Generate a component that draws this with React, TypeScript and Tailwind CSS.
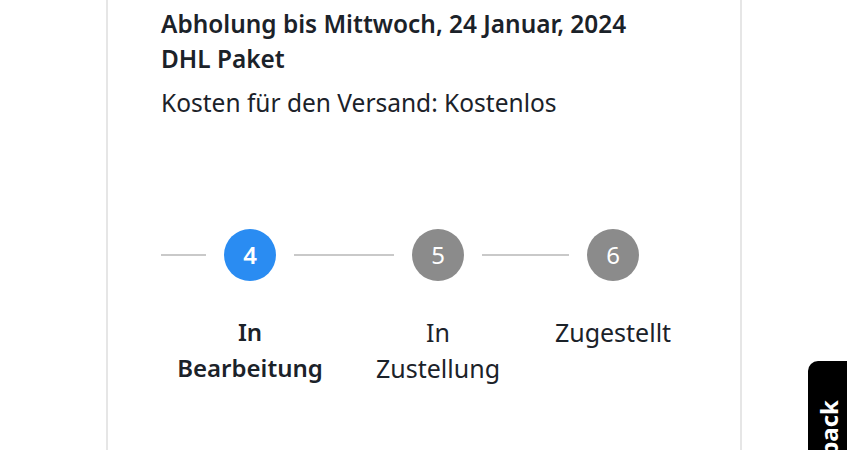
const STEPS = [
  { n: 4, label: ["In", "Bearbeitung"], active: true },
  { n: 5, label: ["In", "Zustellung"], active: false },
  { n: 6, label: ["Zugestellt"], active: false },
];

// line widths before each step circle
const LINES = [45, 100, 87];

export default function App() {
  return (
    <div className="relative h-[450px] w-[847px] overflow-hidden bg-white font-['Noto_Sans','Liberation_Sans',sans-serif] text-[#1b2229]">
      <div className="ml-[106px] h-full w-[636px] border-x-2 border-[#e6e6e6] pl-[53px] pt-[6px]">
        <p className="text-[24.4px] font-semibold leading-[35px]">Abholung bis Mittwoch, 24 Januar, 2024</p>
        <p className="text-[24.4px] font-semibold leading-[35px]">DHL Paket</p>
        <p className="mt-[9px] text-[24.5px] leading-[35px]">Kosten für den Versand: Kostenlos</p>

        {/* Stepper */}
        <div className="mt-[109px] flex items-start gap-[18px]">
          {STEPS.map((step, i) => (
            <div key={step.n} className="flex items-start gap-[18px]">
              <div className="mt-[25px] h-[2px] bg-[#c9c9c9]" style={{ width: LINES[i] }} />
              <div className="flex w-[52px] flex-col items-center">
                <div
                  className={
                    step.active
                      ? "flex h-[52px] w-[52px] items-center justify-center rounded-full bg-[#2a8cf2] text-[24px] font-semibold text-white"
                      : "flex h-[52px] w-[52px] items-center justify-center rounded-full bg-[#8b8b8b] text-[24px] text-white"
                  }
                >
                  {step.n}
                </div>
                <div
                  className={
                    step.active
                      ? "mt-[33px] whitespace-nowrap text-center text-[24px] font-semibold leading-[36px]"
                      : "mt-[33px] whitespace-nowrap text-center text-[25px] leading-[36px]"
                  }
                >
                  {step.label.map((l) => (
                    <div key={l}>{l}</div>
                  ))}
                </div>
              </div>
            </div>
          ))}
        </div>
      </div>

      {/* Feedback tab */}
      <div className="absolute left-[808px] top-[361px] h-[200px] w-[50px] rounded-tl-[10px] bg-black">
        <div className="absolute left-[9px] top-[39px] rotate-180 whitespace-nowrap text-[24px] font-bold leading-[24px] text-white [writing-mode:vertical-rl]">
          Feedback
        </div>
      </div>
    </div>
  );
}
